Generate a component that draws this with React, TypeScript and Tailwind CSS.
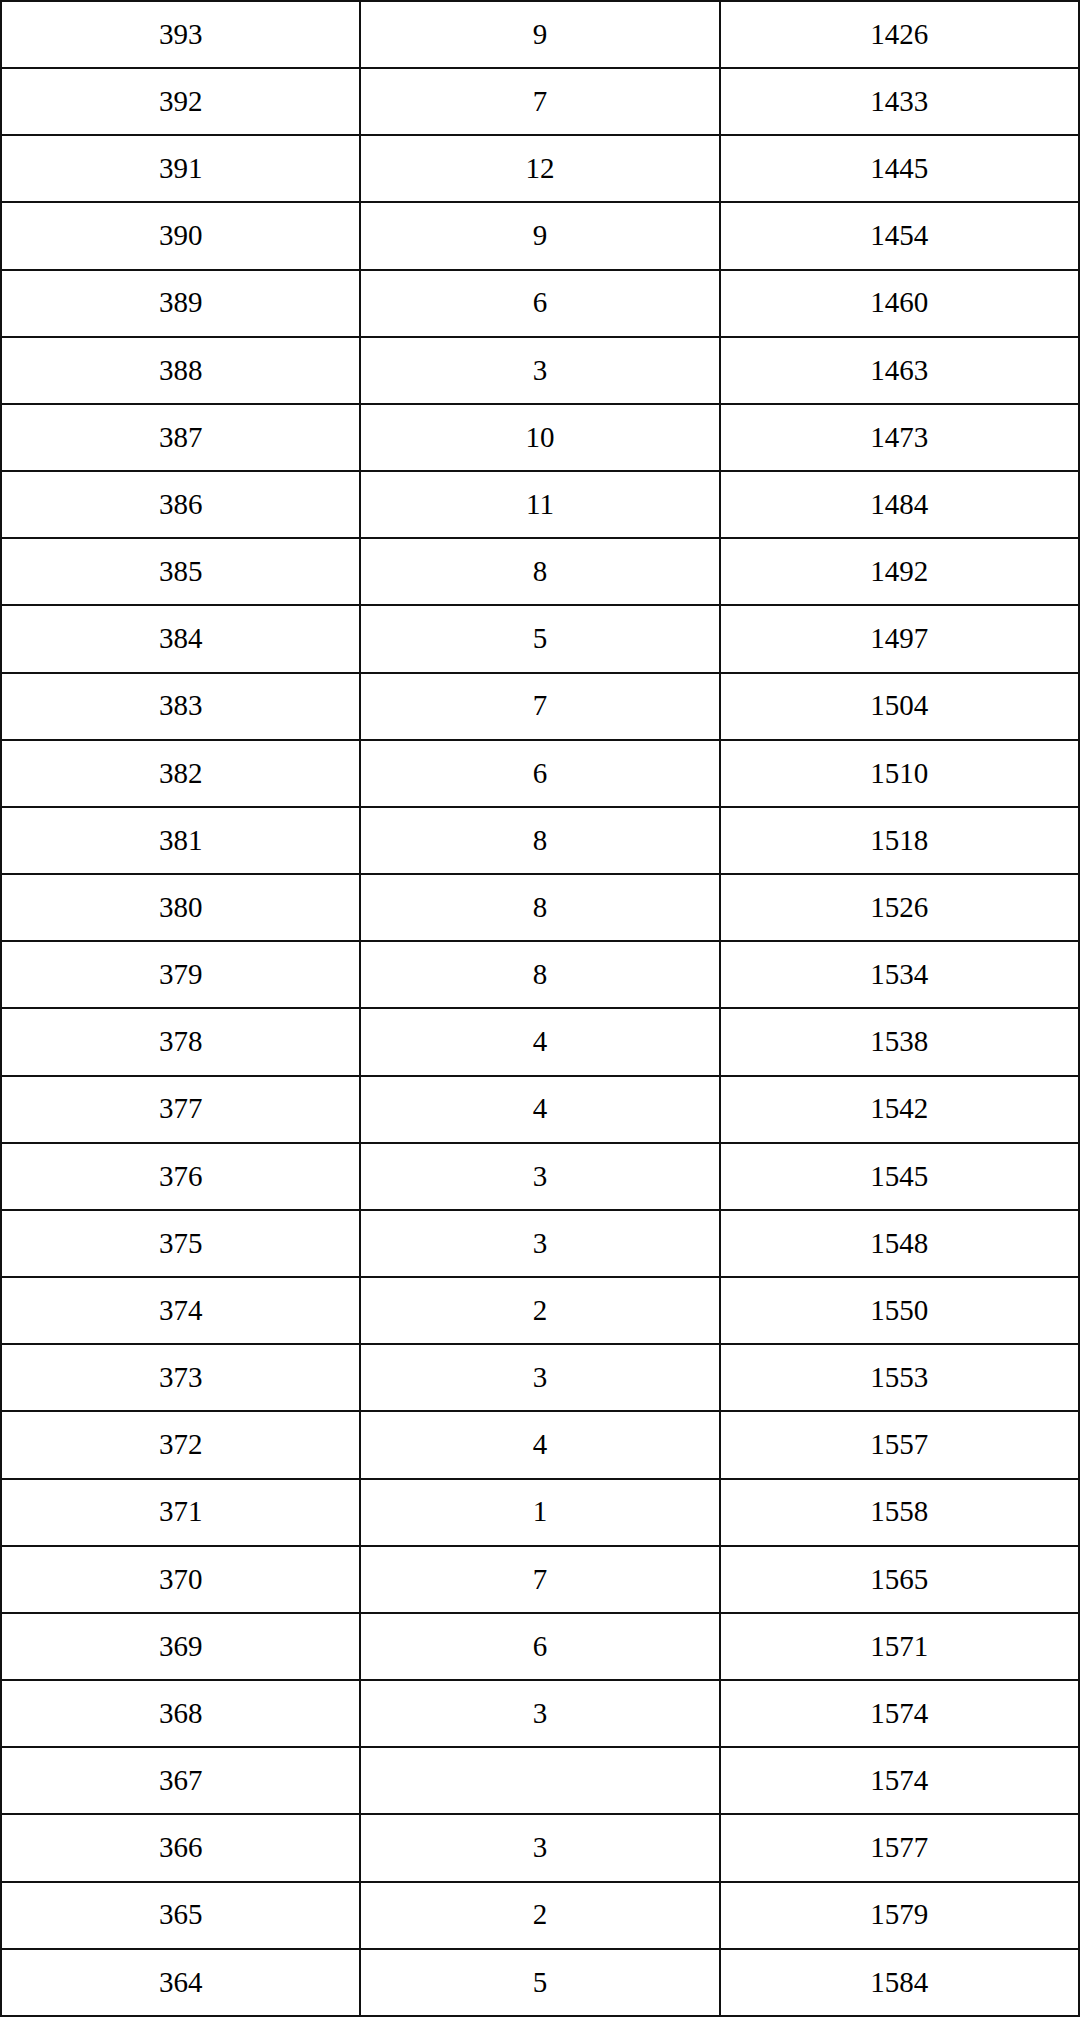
const rows: [string, string, string][] = [
  ['393', '9', '1426'],
  ['392', '7', '1433'],
  ['391', '12', '1445'],
  ['390', '9', '1454'],
  ['389', '6', '1460'],
  ['388', '3', '1463'],
  ['387', '10', '1473'],
  ['386', '11', '1484'],
  ['385', '8', '1492'],
  ['384', '5', '1497'],
  ['383', '7', '1504'],
  ['382', '6', '1510'],
  ['381', '8', '1518'],
  ['380', '8', '1526'],
  ['379', '8', '1534'],
  ['378', '4', '1538'],
  ['377', '4', '1542'],
  ['376', '3', '1545'],
  ['375', '3', '1548'],
  ['374', '2', '1550'],
  ['373', '3', '1553'],
  ['372', '4', '1557'],
  ['371', '1', '1558'],
  ['370', '7', '1565'],
  ['369', '6', '1571'],
  ['368', '3', '1574'],
  ['367', '', '1574'],
  ['366', '3', '1577'],
  ['365', '2', '1579'],
  ['364', '5', '1584'],
]

export default function App() {
  return (
    <div className="h-[2017px] w-[1080px] bg-white">
      <div className="grid h-full w-full grid-cols-3 grid-rows-[repeat(30,1fr)] gap-[2px] bg-[#111] p-[2px] font-['Liberation_Serif',serif] text-[29px] text-black">
        {rows.map((r, i) =>
          r.map((cell, j) => (
            <div key={`${i}-${j}`} className="flex items-center justify-center bg-white">
              {cell}
            </div>
          )),
        )}
      </div>
    </div>
  )
}
